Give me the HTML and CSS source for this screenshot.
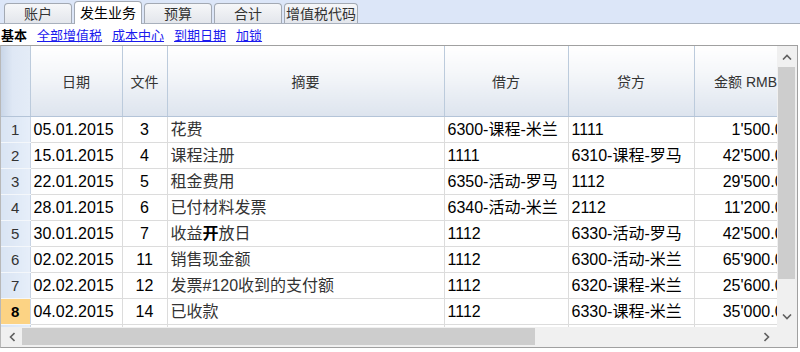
FILE: index.html
```html
<!DOCTYPE html>
<html lang="zh">
<head>
    <meta charset="UTF-8">
    <meta name="viewport" content="width=device-width, initial-scale=1.0">
    <title>发生业务</title>
    <link rel="stylesheet" href="styles.css">
</head>
<body>
    <div class="tabs">
        <div class="tab">账户</div>
        <div class="tab active">发生业务</div>
        <div class="tab">预算</div>
        <div class="tab">合计</div>
        <div class="tab">增值税代码</div>
    </div>
    <div class="subbar">
        <span class="current">基本</span>
        <a href="#">全部增值税</a>
        <a href="#">成本中心</a>
        <a href="#">到期日期</a>
        <a href="#">加锁</a>
    </div>
    <div class="grid">
        <div class="viewport">
            <table>
                <colgroup>
                    <col class="c-num">
                    <col class="c-date">
                    <col class="c-doc">
                    <col class="c-desc">
                    <col class="c-debit">
                    <col class="c-credit">
                    <col class="c-amount">
                </colgroup>
                <thead>
                    <tr>
                        <th class="corner"></th>
                        <th>日期</th>
                        <th>文件</th>
                        <th>摘要</th>
                        <th>借方</th>
                        <th>贷方</th>
                        <th>金额 RMB</th>
                    </tr>
                </thead>
                <tbody>
                    <tr>
                        <td class="num">1</td><td>05.01.2015</td><td class="doc">3</td><td class="desc">花费</td>
                        <td>6300-课程-米兰</td><td>1111</td><td class="amount">1'500.00</td>
                    </tr>
                    <tr>
                        <td class="num">2</td><td>15.01.2015</td><td class="doc">4</td><td class="desc">课程注册</td>
                        <td>1111</td><td>6310-课程-罗马</td><td class="amount">42'500.00</td>
                    </tr>
                    <tr>
                        <td class="num">3</td><td>22.01.2015</td><td class="doc">5</td><td class="desc">租金费用</td>
                        <td>6350-活动-罗马</td><td>1112</td><td class="amount">29'500.00</td>
                    </tr>
                    <tr>
                        <td class="num">4</td><td>28.01.2015</td><td class="doc">6</td><td class="desc">已付材料发票</td>
                        <td>6340-活动-米兰</td><td>2112</td><td class="amount">11'200.00</td>
                    </tr>
                    <tr>
                        <td class="num">5</td><td>30.01.2015</td><td class="doc">7</td><td class="desc">收益<b>开</b>放日</td>
                        <td>1112</td><td>6330-活动-罗马</td><td class="amount">42'500.00</td>
                    </tr>
                    <tr>
                        <td class="num">6</td><td>02.02.2015</td><td class="doc">11</td><td class="desc">销售现金额</td>
                        <td>1112</td><td>6300-活动-米兰</td><td class="amount">65'900.00</td>
                    </tr>
                    <tr>
                        <td class="num">7</td><td>02.02.2015</td><td class="doc">12</td><td class="desc">发票#120收到的支付额</td>
                        <td>1112</td><td>6320-课程-米兰</td><td class="amount">25'600.00</td>
                    </tr>
                    <tr class="selected">
                        <td class="num">8</td><td>04.02.2015</td><td class="doc">14</td><td class="desc">已收款</td>
                        <td>1112</td><td>6330-课程-米兰</td><td class="amount">35'000.00</td>
                    </tr>
                    <tr>
                        <td class="num"></td><td></td><td></td><td></td><td></td><td></td><td></td>
                    </tr>
                </tbody>
            </table>
        </div>
        <div class="vscroll">
            <div class="arrow">
                <svg width="10" height="6" viewBox="0 0 10 6"><path d="M1 5.5 L5 1.5 L9 5.5" fill="none" stroke="#606060" stroke-width="1.6"/></svg>
            </div>
            <div class="vthumb"></div>
            <div class="track"></div>
            <div class="arrow">
                <svg width="10" height="6" viewBox="0 0 10 6"><path d="M1 0.5 L5 4.5 L9 0.5" fill="none" stroke="#606060" stroke-width="1.6"/></svg>
            </div>
        </div>
        <div class="hscroll">
            <div class="arrow">
                <svg width="6" height="10" viewBox="0 0 6 10"><path d="M5.5 1 L1.5 5 L5.5 9" fill="none" stroke="#606060" stroke-width="1.6"/></svg>
            </div>
            <div class="hthumb"></div>
            <div class="track"></div>
            <div class="arrow">
                <svg width="6" height="10" viewBox="0 0 6 10"><path d="M0.5 1 L4.5 5 L0.5 9" fill="none" stroke="#606060" stroke-width="1.6"/></svg>
            </div>
        </div>
        <div class="scroll-corner"></div>
    </div>
</body>
</html>
```

FILE: styles.css
```css
body {
    margin: 0;
    width: 800px;
    height: 352px;
    overflow: hidden;
    background: #ffffff;
    font-family: "Liberation Sans", "Noto Sans CJK SC", sans-serif;
    color: #000;
}
.tabs {
    height: 23px;
    background: #dce6f8;
    border-bottom: 1px solid #a8b0bc;
    display: flex;
    align-items: flex-end;
    gap: 2px;
    padding-left: 4px;
}
.tab {
    width: 66px;
    height: 19px;
    border: 1px solid #a3a9b3;
    border-bottom: none;
    border-radius: 4px 4px 0 0;
    background: linear-gradient(#f6f7f9, #e3e6ec);
    font-size: 14px;
    line-height: 20px;
    text-align: center;
    color: #333;
}
.tab.active {
    height: 22px;
    background: #ffffff;
    color: #000;
    line-height: 22px;
    margin-bottom: -1px;
}
.tab:last-child {
    width: 72px;
}
.subbar {
    height: 21px;
    display: flex;
    align-items: center;
    gap: 10px;
    padding-left: 1px;
    font-size: 13px;
}
.subbar .current {
    font-weight: bold;
}
.subbar a {
    color: #1a1aee;
    text-decoration: underline;
}
.grid {
    display: grid;
    grid-template-columns: 776px 20px;
    grid-template-rows: 281px 20px;
    border: 1px solid #a0a0a0;
    border-left-color: #b8b8b8;
    width: 796px;
    height: 301px;
    background: #f0f0f0;
}
.viewport {
    overflow: hidden;
    background: #ffffff;
}
table {
    border-collapse: collapse;
    table-layout: fixed;
    width: 796px;
}
.c-num { width: 29px; }
.c-date { width: 92px; }
.c-doc { width: 45px; }
.c-desc { width: 277px; }
.c-debit { width: 124px; }
.c-credit { width: 126px; }
.c-amount { width: 103px; }
th {
    height: 70px;
    padding: 0;
    font-weight: normal;
    font-size: 14px;
    color: #333;
    white-space: nowrap;
    background: linear-gradient(#ffffff, #f4f6f9 40%, #dde4ee);
    border-right: 1px solid #bccbdc;
    border-bottom: 1px solid #b4c4d8;
    text-align: center;
}
th.corner {
    background: linear-gradient(to right, #c9d6e8, #dfe8f5 40%, #e4ecf7);
}
td {
    height: 25px;
    padding: 0 3px;
    font-size: 16px;
    line-height: 20px;
    vertical-align: middle;
    white-space: nowrap;
    overflow: hidden;
    border-right: 1px solid #dcdcdc;
    border-bottom: 1px solid #dcdcdc;
}
td.num {
    padding: 0;
    text-align: center;
    font-size: 15px;
    color: #333;
    background: linear-gradient(to right, #d9e4f3, #e6eef9);
    border-right: 1px solid #c7d3e3;
    border-bottom: 1px solid #f4f7fb;
}
td.doc {
    text-align: center;
}
td.desc {
    color: #333;
}
td.desc b {
    color: #000;
}
td.amount {
    text-align: right;
    overflow: visible;
    padding-right: 4px;
}
tr.selected td.num {
    background: #fcd384;
    font-weight: bold;
    color: #000;
}
.vscroll {
    display: flex;
    flex-direction: column;
    background: #f0f0f0;
}
.vscroll .arrow {
    height: 21px;
    display: flex;
    align-items: center;
    justify-content: center;
}
.vthumb {
    height: 212px;
    margin: 0 2px 0 1px;
    background: #cdcdcd;
}
.track {
    flex: 1;
}
.hscroll {
    display: flex;
    background: #f0f0f0;
}
.hscroll .arrow {
    width: 21px;
    display: flex;
    align-items: center;
    justify-content: center;
}
.hthumb {
    width: 513px;
    margin: 1px 0 2px;
    background: #cdcdcd;
}
.scroll-corner {
    background: #f0f0f0;
}
```
